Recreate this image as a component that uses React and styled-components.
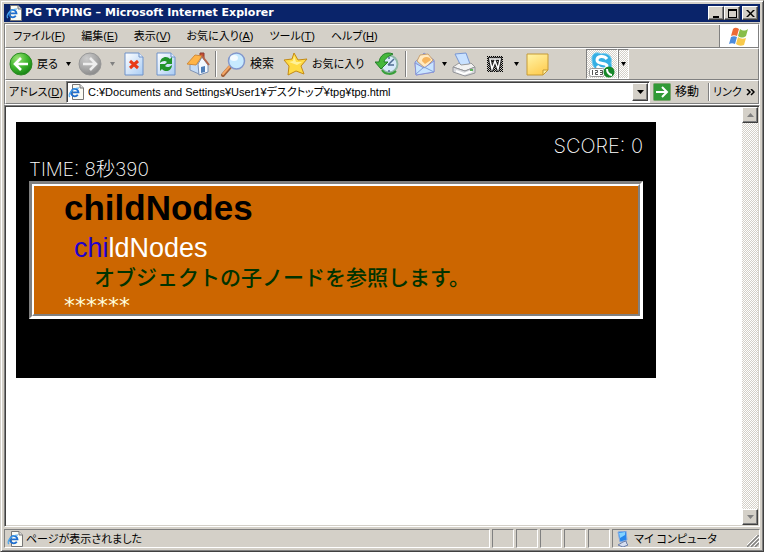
import React from "react";
import styled, { createGlobalStyle, css } from "styled-components";

const face = "#d4d0c8";
const shade = "#808080";
const dark = "#404040";
const uiFont = '"Liberation Sans", "Noto Sans CJK JP", sans-serif';
const lightFont = 'Inter, "Noto Sans CJK JP", sans-serif';

const GlobalStyle = createGlobalStyle`
  * { box-sizing: border-box; }
  body { margin: 0; background: ${face}; }
  button, input { font: inherit; color: inherit; }
  svg { display: block; flex: none; }
`;

const raised = css`
  border: 1px solid;
  border-color: #fff ${dark} ${dark} #fff;
  box-shadow: inset -1px -1px ${shade};
`;

const dither = css`
  background: repeating-conic-gradient(#fff 0 25%, ${face} 0 50%) 0 0 / 2px 2px;
`;

const Window = styled.div`
  display: flex;
  flex-direction: column;
  min-height: 100vh;
  padding: 3px 2px 2px 3px;
  border: 1px solid;
  border-color: ${face} ${dark} ${dark} ${face};
  box-shadow: inset 1px 1px #fff, inset -1px -1px ${shade};
  background: ${face};
  color: #000;
  font: 12px/16px ${uiFont};
  font-feature-settings: "palt";
`;

const TitleBar = styled.header`
  display: flex;
  align-items: center;
  height: 18px;
  margin-right: 1px;
  padding: 0 2px;
  background: #0a246a;
  color: #fff;
`;

const Title = styled.h1`
  flex: 1;
  margin: 0 0 0 3px;
  font: bold 11px/16px "DejaVu Sans", sans-serif;
  white-space: nowrap;
`;

const CaptionButton = styled.button`
  ${raised}
  display: grid;
  place-items: center;
  width: 16px;
  height: 14px;
  margin-left: ${(p) => (p.$apart ? 2 : 0)}px;
  padding: 0;
  background: ${face};
  color: #000;
`;

const Bars = styled.div`
  margin: 1px 1px 0 0;
  border: 1px solid;
  border-color: ${shade} #fff #fff ${shade};
`;

const Bar = styled.div`
  display: flex;
  align-items: stretch;
  height: ${(p) => p.$height}px;
  border: 1px solid;
  border-color: #fff ${shade} ${shade} #fff;
`;

const MenuBar = styled.nav`
  display: flex;
  flex: 1;
  align-items: center;
  gap: 16px;
  padding-left: 7px;
`;

const MenuButton = styled.button`
  padding: 0;
  border: 0;
  background: none;
  font-size: 11px;
  white-space: nowrap;
`;

const Brand = styled.div`
  display: grid;
  place-items: center;
  width: 39px;
  border-left: 1px solid ${shade};
  background: #fff;
`;

const ToolButton = styled.button`
  display: flex;
  flex: none;
  align-items: center;
  justify-content: ${(p) => (p.$text ? "flex-start" : "center")};
  gap: 4px;
  width: ${(p) => p.$width}px;
  padding: 0 0 0 ${(p) => (p.$text ? 3 : 0)}px;
  border: 0;
  background: none;
  font-size: ${(p) => (p.$small ? 11 : 12)}px;
  white-space: nowrap;
  ${(p) => p.$pressed && css`
    ${dither}
    border: 1px solid;
    border-color: ${shade} #fff #fff ${shade};
  `}
`;

const Divider = styled.span`
  flex: none;
  width: 2px;
  margin: 2px ${(p) => p.$space}px;
  border-left: 1px solid ${shade};
  border-right: 1px solid #fff;
`;

const Gap = styled.span`
  flex: 0 1 35px;
`;

const AddressForm = styled.form`
  display: flex;
  flex: 1;
  min-width: 0;
  align-items: center;
  gap: 4px;
  padding-left: 3px;
`;

const AddressLabel = styled.label`
  width: 53px;
  font-size: 11px;
  white-space: nowrap;
`;

const AddressField = styled.div`
  display: flex;
  flex: 1;
  min-width: 0;
  align-items: center;
  height: 22px;
  padding: 1px;
  border: 1px solid;
  border-color: ${shade} #fff #fff ${shade};
  box-shadow: inset 1px 1px ${dark};
  background: #fff;
`;

const AddressInput = styled.input`
  flex: 1;
  min-width: 0;
  margin-left: 4px;
  padding: 0;
  border: 0;
  outline: 0;
  background: none;
  font-size: 11px;
`;

const SquareButton = styled.button`
  ${raised}
  display: grid;
  flex: none;
  place-items: center;
  width: 16px;
  height: ${(p) => p.$height}px;
  padding: 0;
  background: ${face};
`;

const Viewport = styled.div`
  display: flex;
  flex: 1;
  margin-right: 1px;
  border: 1px solid;
  border-color: ${shade} #fff #fff ${shade};
  box-shadow: inset 1px 1px ${dark}, inset -1px -1px ${face};
  padding: 1px;
  background: #fff;
`;

const Page = styled.main`
  flex: 1;
  min-width: 0;
  padding: 15px 10px;
`;

const ScrollBar = styled.div`
  ${dither}
  display: flex;
  flex-direction: column;
  justify-content: space-between;
`;

const Game = styled.section`
  max-width: 640px;
  min-height: 256px;
  padding: 13px;
  background: #000;
  color: #fff;
  font: 200 20px/23px ${lightFont};
`;

const Score = styled.div`
  text-align: right;
`;

const Time = styled.div`
  font-size: 19px;
  text-align: left;
`;

const Frame = styled.div`
  border: 3px solid;
  border-color: ${shade} #fff #fff ${shade};
`;

const Board = styled.div`
  border: 2px solid;
  border-color: #fff ${shade} ${shade} #fff;
  padding: 0 30px;
  min-height: 132px;
  background: #cc6600;
  font-family: ${uiFont};
`;

const Word = styled.h2`
  margin: 0;
  color: #000;
  font-size: 35px;
  font-weight: bold;
  line-height: 44px;
`;

const Typing = styled.p`
  margin: 0 0 0 10px;
  font-size: 27px;
  font-weight: 400;
  line-height: 36px;
`;

const Typed = styled.span`
  color: #2200cc;
`;

const Hint = styled.p`
  margin: 0 0 12px 30px;
  color: #003300;
  font: 500 21px/20px "Noto Sans CJK JP", sans-serif;
`;

const Misses = styled.p`
  margin: 0;
  color: #ffffdd;
  font: 400 22px/16px "DejaVu Sans", sans-serif;
`;

const StatusBar = styled.footer`
  display: flex;
  gap: 2px;
  height: 22px;
  padding: 2px 1px 1px 0;
`;

const StatusCell = styled.div`
  display: flex;
  flex: ${(p) => (p.$width ? `0 0 ${p.$width}px` : "1")};
  align-items: center;
  gap: 3px;
  padding-left: 2px;
  border: 1px solid;
  border-color: ${shade} #fff #fff ${shade};
  font-size: 11px;
  white-space: nowrap;
`;

const Grip = styled.span`
  margin-left: auto;
  align-self: flex-end;
`;

const PageIcon = () => (
  <svg width="16" height="16" viewBox="0 0 16 16" aria-hidden="true">
    <path d="M4.500 .5h7.500l3.500 3.500v11.500h-11z" fill="#fbfbf4" stroke="#777" />
    <path d="M12 .5V4h3.500" fill="#ddd" stroke="#777" />
    <path d="M9.800 10.800A3.700 3.700 0 1 1 10.500 8.300H4.500" fill="none" stroke="#1f6fd0" strokeWidth="1.800" />
    <path d="M2 13C-1 11 4 4 11 4" fill="none" stroke="#49a5ed" strokeWidth="1.200" />
  </svg>
);

const Down = ({ color = "#000", w = 5 }) => (
  <svg width={w} height="4" viewBox="0 0 6 3" preserveAspectRatio="none" aria-hidden="true">
    <path d="M0 0h6L3 3z" fill={color} />
  </svg>
);

const Circle = ({ gray }) => (
  <svg width="24" height="24" viewBox="0 0 24 24" aria-hidden="true">
    <defs>
      <radialGradient id={gray ? "cg" : "cb"} cx=".35" cy=".25" r=".8">
        <stop stopColor={gray ? "#ccc" : "#9be276"} />
        <stop offset=".55" stopColor={gray ? "#aaa" : "#3eb52d"} />
        <stop offset="1" stopColor={gray ? "#888" : "#137f12"} />
      </radialGradient>
    </defs>
    <circle cx="12" cy="12" r="11" fill={`url(#${gray ? "cg" : "cb"})`} stroke={gray ? "#999" : "#2b8a24"} />
    <path
      d={gray ? "M5 12h13M12 6l6 6-6 6" : "M19 12H6M12 6l-6 6 6 6"}
      fill="none" stroke={gray ? "#eee" : "#fff"} strokeWidth="2.600"
    />
  </svg>
);

const Sheet = ({ children }) => (
  <svg width="20" height="24" viewBox="0 0 20 24" aria-hidden="true">
    <defs>
      <linearGradient id="sheet" x2="1" y2="1">
        <stop stopColor="#fff" /><stop offset="1" stopColor="#a9ccf4" />
      </linearGradient>
    </defs>
    <path d="M1 1h14l4 4v18H1z" fill="url(#sheet)" stroke="#6f92c9" />
    <path d="M15 1v4h4" fill="#e5f0ff" stroke="#6f92c9" />
    {children}
  </svg>
);

const HomeIcon = () => (
  <svg width="24" height="24" viewBox="0 0 24 24" aria-hidden="true">
    <path d="M14 1h4v8l-4-3z" fill="#c94d30" stroke="#8b3c32" />
    <path d="M4 12l4-3 5 3v10l-9-4z" fill="#c5dcf6" stroke="#8295b6" />
    <path d="M12 12l4-7 6 8v7l-9 3z" fill="#f4f9ff" stroke="#7b91b5" />
    <path d="M1 12L9 3l7 1-6 9z" fill="#ffb447" stroke="#d08a3a" />
    <path d="M16 4l7 9" stroke="#b3654a" strokeWidth="2" />
    <path d="M15 15l4-1v6l-4 1z" fill="#507fb9" />
  </svg>
);

const SearchIcon = () => (
  <svg width="25" height="25" viewBox="0 0 25 25" aria-hidden="true">
    <path d="M9 15l-7 8" stroke="#a4623a" strokeWidth="4" strokeLinecap="round" />
    <path d="M9 14l-7 8" stroke="#f4a765" strokeWidth="2" strokeLinecap="round" />
    <circle cx="15.500" cy="9" r="8" fill="#c6eaff" stroke="#8297cc" strokeWidth="1.500" />
    <ellipse cx="13" cy="6" rx="4" ry="3" fill="#fff" opacity=".8" />
  </svg>
);

const StarIcon = () => (
  <svg width="25" height="24" viewBox="0 0 25 24" aria-hidden="true">
    <path d="M11 1l4 7 9-1-6 7 3 8-8-3-8 4 1-9-5-6 8-1z" fill="#ffdc45" stroke="#c38a16" strokeLinejoin="round" />
    <path d="M11 4l2 6 6 0-5 3-8-3 4-1z" fill="#fff29a" />
  </svg>
);

const HistoryIcon = () => (
  <svg width="24" height="24" viewBox="0 0 24 24" aria-hidden="true">
    <circle cx="14" cy="12" r="8.500" fill="#d8eafb" stroke="#8fb8a5" strokeWidth="2" />
    <path d="M13 13l6-6M13 13h6M14 5v2M14 18v2" stroke="#506d92" strokeWidth="1.500" />
    <path d="M18 2C11-1 5 3 4 10H0l6 7 7-7H9c1-4 5-6 9-8z" fill="#45b73c" stroke="#227d28" />
    <path d="M7 18c3 5 10 5 14 1" fill="none" stroke="#389f3a" strokeWidth="2" />
  </svg>
);

const MailIcon = () => (
  <svg width="22" height="24" viewBox="0 0 22 24" aria-hidden="true">
    <path d="M1 10L10 1l10 7v12L2 23z" fill="#a9cbf4" stroke="#8b93ce" />
    <path d="M3 9l3-6 8-1 5 6-8 8z" fill="#ffeac3" stroke="#c9a171" />
    <path d="M8 9c0-5 8-5 9-1l-6 4z" fill="#f6b45d" />
    <path d="M1 11l9 5L20 9v11L2 23z" fill="#c9e5ff" stroke="#8b93d4" />
    <path d="M2 22l8-7 10 5" fill="none" stroke="#7e9fda" />
  </svg>
);

const PrinterIcon = () => (
  <svg width="24" height="25" viewBox="0 0 24 25" aria-hidden="true">
    <path d="M3 2l11-1 4 11-9 2z" fill="#c8e1ff" stroke="#7897d4" />
    <path d="M1 15l6-4 2 2 8-1 2-1 4 4-10 4z" fill="#f2f2f2" stroke="#999" />
    <path d="M1 15l12 4 10-4v6l-10 3-12-4z" fill="#d8d9dd" stroke="#95969a" />
    <path d="M4 19l8 3 8-3" stroke="#fff" fill="none" strokeWidth="2" />
    <path d="M18 18h3" stroke="#5eb45b" strokeWidth="2" />
  </svg>
);

const WordIcon = () => (
  <svg width="16" height="16" viewBox="0 0 16 16" aria-hidden="true">
    <defs>
      <pattern id="checks" width="2" height="2" patternUnits="userSpaceOnUse">
        <path d="M0 0h1v1H0zM1 1h1v1H1z" />
      </pattern>
    </defs>
    <path d="M0 0h16v16H0z" fill="#c8c5be" />
    <path d="M0 0h16v16H0z" fill="url(#checks)" />
    <path d="M1 3h14M3 4l2 9 3-8 3 8 2-9" fill="none" stroke="#222" strokeWidth="3.500" />
    <path d="M2 3h12M3 4l2 9 3-8 3 8 2-9" fill="none" stroke="#fff" strokeWidth="1.500" />
  </svg>
);

const NoteIcon = () => (
  <svg width="23" height="23" viewBox="0 0 23 23" aria-hidden="true">
    <defs>
      <linearGradient id="note" x2=".5" y2="1"><stop stopColor="#fff5a9" /><stop offset="1" stopColor="#ffcf57" /></linearGradient>
    </defs>
    <path d="M1 1h21v16l-5 5H1z" fill="url(#note)" stroke="#c59a37" />
    <path d="M17 22v-5h5z" fill="#fff0a0" stroke="#c59a37" />
  </svg>
);

const SkypeIcon = () => (
  <svg width="26" height="27" viewBox="0 0 26 27" aria-hidden="true">
    <path d="M3 9C2 3 7 0 12 3c7-2 12 3 10 9 2 5-1 9-6 8C9 22 3 17 3 9z" fill="#35afe4" stroke="#7bcff0" />
    <path d="M18 8c-3-4-10-3-10 1 0 5 10 2 10 6 0 4-7 4-10 0" fill="none" stroke="#fff" strokeWidth="3" />
    <rect x=".5" y="17.500" width="15" height="8" rx="2" fill="#fff" stroke="#9a9a9a" />
    <path d="M3.500 19v5M6 19.500h2.500v2H6.500v2H9M11 19.500h2.500v4H11M11 21.500h2.500" fill="none" stroke="#555" />
    <circle cx="20" cy="21" r="5.500" fill="#168729" />
    <path d="M18 18c0 3 2 6 5 6" fill="none" stroke="#fff" strokeWidth="2" />
  </svg>
);

const GoIcon = () => (
  <svg width="18" height="18" viewBox="0 0 18 18" aria-hidden="true">
    <rect x=".5" y=".5" width="17" height="17" rx="1" fill="#319a36" stroke="#79a56d" />
    <path d="M3 9h11M9 4l5 5-5 5" fill="none" stroke="#fff" strokeWidth="2" />
  </svg>
);

const FlagIcon = () => (
  <svg width="20" height="19" viewBox="0 0 20 19" aria-hidden="true">
    <path d="M4 2c2-2 4-1 6 0L8 9C6 8 4 8 2 9z" fill="#ed6a35" />
    <path d="M11 2c3 2 5 2 8 0l-2 7c-3 2-5 2-8 0z" fill="#87bd48" />
    <path d="M2 10c2-1 4-1 6 0l-2 7c-2-1-4-1-6 0z" fill="#4c8bdc" />
    <path d="M9 10c3 2 5 2 8 1l-2 7c-3 1-5 1-8-1z" fill="#f8c94b" />
  </svg>
);

const ComputerIcon = () => (
  <svg width="16" height="16" viewBox="0 0 16 16" aria-hidden="true">
    <path d="M3 1l8-1 1 9-7 2z" fill="#2586ec" stroke="#87aae0" />
    <path d="M4 2l6-1v3L5 7z" fill="#83d2ff" />
    <path d="M8 11l3-1 1 3 1 1-5 2-5-2z" fill="#d6def0" stroke="#6c7faa" />
  </svg>
);

const menus = [
  ["ファイル", "F"], ["編集", "E"], ["表示", "V"],
  ["お気に入り", "A"], ["ツール", "T"], ["ヘルプ", "H"],
];

const captions = [
  ["最小化", "M2 8h6v2H2z"],
  ["最大化", "M1 1h9v9H1zM2 3v6h7V3z"],
  ["閉じる", "M1 2h2l2.500 2.500L8 2h2L6.500 5.500 10 9H8L5.500 6.500 3 9H1l3.500-3.500z"],
];

export default function App() {
  return (
    <Window>
      <GlobalStyle />
      <TitleBar>
        <PageIcon />
        <Title>PG TYPING – Microsoft Internet Explorer</Title>
        {captions.map(([label, d], i) => (
          <CaptionButton key={label} aria-label={label} $apart={i === 2}>
            <svg width="11" height="11" viewBox="0 0 11 11"><path d={d} fillRule="evenodd" /></svg>
          </CaptionButton>
        ))}
      </TitleBar>

      <Bars>
        <Bar $height={24}>
          <MenuBar>
            {menus.map(([name, key]) => (
              <MenuButton key={key}>{name}(<u>{key}</u>)</MenuButton>
            ))}
          </MenuBar>
          <Brand><FlagIcon /></Brand>
        </Bar>

        <Bar $height={32}>
          <ToolButton $width={56} $text $small><Circle />戻る</ToolButton>
          <ToolButton $width={12} aria-label="戻る履歴"><Down /></ToolButton>
          <ToolButton $width={32} aria-label="進む"><Circle gray /></ToolButton>
          <ToolButton $width={12} aria-label="進む履歴"><Down color="#808080" /></ToolButton>
          <ToolButton $width={32} aria-label="中止">
            <Sheet><path d="M6 9l8 7M14 9l-8 7" stroke="#e93a18" strokeWidth="3" /></Sheet>
          </ToolButton>
          <ToolButton $width={32} aria-label="更新">
            <Sheet>
              <path d="M4 11c0-6 7-8 10-4l2-2v7H9l2-2c-2-2-5-1-7 1z" fill="#20932a" />
              <path d="M16 13c0 6-7 8-10 4l-2 2v-7h7l-2 2c2 2 5 1 7-1z" fill="#20932a" />
            </Sheet>
          </ToolButton>
          <ToolButton $width={32} aria-label="ホーム"><HomeIcon /></ToolButton>
          <Divider $space={1} />
          <ToolButton $width={62} $text><SearchIcon />検索</ToolButton>
          <ToolButton $width={90} $text $small><StarIcon />お気に入り</ToolButton>
          <ToolButton $width={34} aria-label="履歴"><HistoryIcon /></ToolButton>
          <Divider $space={1} />
          <ToolButton $width={34} aria-label="メール"><MailIcon /></ToolButton>
          <ToolButton $width={5} aria-label="メールのメニュー"><Down /></ToolButton>
          <ToolButton $width={34} aria-label="印刷"><PrinterIcon /></ToolButton>
          <ToolButton $width={28} aria-label="Word で編集"><WordIcon /></ToolButton>
          <ToolButton $width={14} aria-label="編集のメニュー"><Down /></ToolButton>
          <ToolButton $width={28} aria-label="メモ"><NoteIcon /></ToolButton>
          <Gap />
          <ToolButton $width={32} $pressed aria-label="Skype"><SkypeIcon /></ToolButton>
          <ToolButton $width={11} $pressed aria-label="Skype のメニュー"><Down /></ToolButton>
        </Bar>

        <Bar $height={24}>
          <AddressForm onSubmit={(e) => e.preventDefault()}>
            <AddressLabel htmlFor="address">アドレス(<u>D</u>)</AddressLabel>
            <AddressField>
              <PageIcon />
              <AddressInput id="address" defaultValue="C:¥Documents and Settings¥User1¥デスクトップ¥tpg¥tpg.html" />
              <SquareButton type="button" $height={18} aria-label="アドレス一覧"><Down w={7} /></SquareButton>
            </AddressField>
          </AddressForm>
          <ToolButton $width={58} $text><GoIcon />移動</ToolButton>
          <Divider $space={0} />
          <ToolButton $width={48} $text $small>
            リンク
            <svg width="9" height="7" viewBox="0 0 9 7"><path d="M1 0l3 3-3 3M5 0l3 3-3 3" fill="none" stroke="#000" strokeWidth="1.500" /></svg>
          </ToolButton>
        </Bar>
      </Bars>

      <Viewport>
        <Page>
          <Game>
            <Score>SCORE: 0</Score>
            <Time>TIME: 8秒390</Time>
            <Frame>
              <Board>
                <Word>childNodes</Word>
                <Typing><Typed>chi</Typed>ldNodes</Typing>
                <Hint>オブジェクトの子ノードを参照します。</Hint>
                <Misses>******</Misses>
              </Board>
            </Frame>
          </Game>
        </Page>
        <ScrollBar>
          <SquareButton $height={16} aria-label="上へスクロール">
            <svg width="7" height="4" viewBox="0 0 7 4"><path d="M0 4h7L3.500 0z" fill="#808080" /></svg>
          </SquareButton>
          <SquareButton $height={16} aria-label="下へスクロール"><Down w={7} color="#808080" /></SquareButton>
        </ScrollBar>
      </Viewport>

      <StatusBar>
        <StatusCell><PageIcon />ページが表示されました</StatusCell>
        {[0, 1, 2, 3, 4].map((n) => <StatusCell key={n} $width={22} />)}
        <StatusCell $width={148}>
          <ComputerIcon />マイ コンピュータ
          <Grip>
            <svg width="12" height="12" viewBox="0 0 12 12">
              <path d="M0 12L12 0M4 12l8-8M8 12l4-4" stroke="#808080" strokeWidth="1.500" />
              <path d="M-1 11L11-1M3 11l9-9M7 11l5-5" stroke="#fff" />
            </svg>
          </Grip>
        </StatusCell>
      </StatusBar>
    </Window>
  );
}
